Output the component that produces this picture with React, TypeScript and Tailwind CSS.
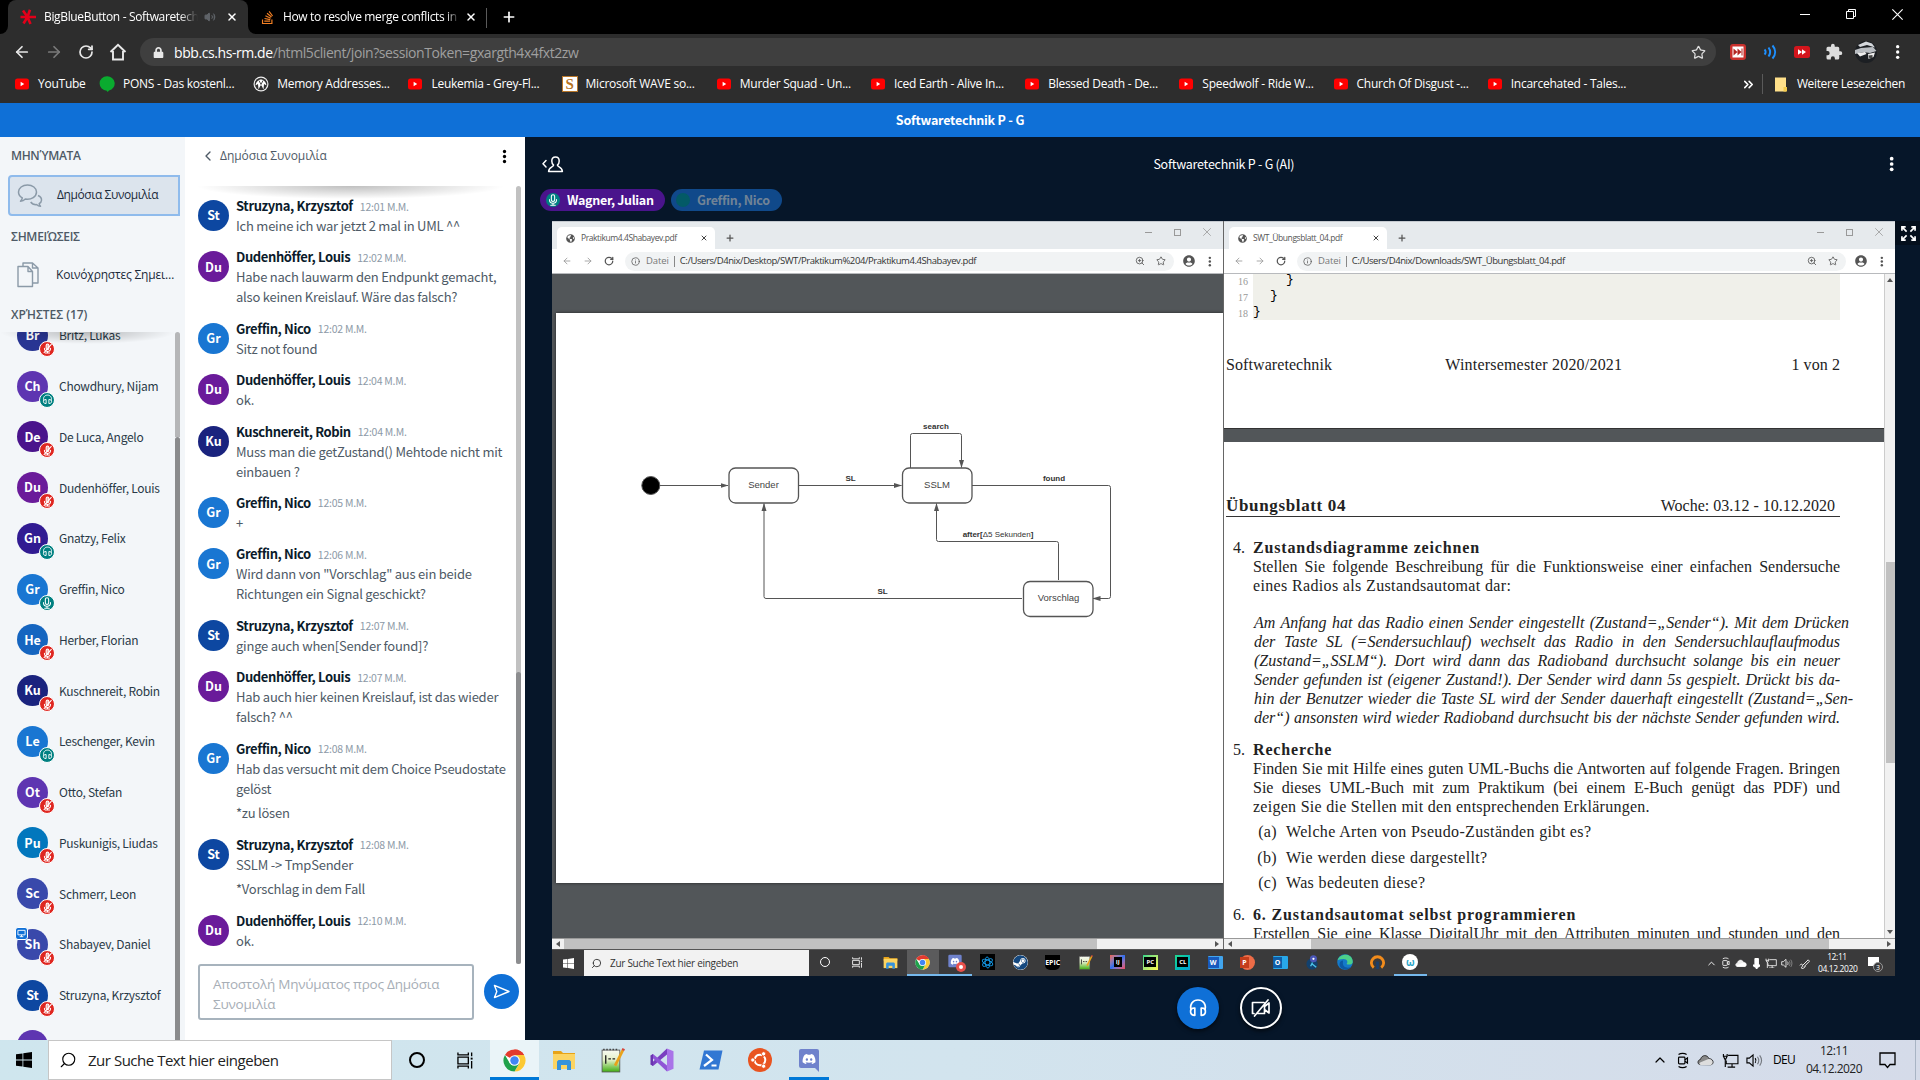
import React from "react";
import {
  ArrowLeft, ArrowRight, RotateCw, Star, X, Plus, Volume2, Search, ZoomIn, Info,
  ChevronLeft, ChevronUp, ChevronsRight,
} from "lucide-react";
import { FaDiscord, FaSteam, FaPuzzlePiece, FaStackOverflow, FaGlobeAmericas, FaUserCircle, FaLock } from "react-icons/fa";

const SEGOE = "font-['Open_Sans','Noto_Sans',sans-serif]";
const SOURCE = "font-['Noto_Sans_CJK_JP','Open_Sans',sans-serif]";
const GREEK = "font-['Open_Sans','Noto_Sans',sans-serif]";
const SERIF = "font-['Liberation_Serif',serif]";

/* ---------- icons ---------- */

function YouTube() {
  return (
    <svg viewBox="0 0 16 16" className="size-4 shrink-0">
      <rect x="1" y="2.5" width="14" height="11" rx="2.5" fill="#f00" />
      <path d="M6.6 5.8v4.4L10.2 8z" fill="#fff" />
    </svg>
  );
}
function Pons() {
  return (
    <svg viewBox="0 0 16 16" className="size-4 shrink-0">
      <path d="M8 .3a7.4 7.2 0 0 1 2 14.2L8.600 16l-.8-1.300A7.300 7.200 0 0 1 8 .3z" fill="#0aab2f" />
    </svg>
  );
}
function Memory() {
  return (
    <svg viewBox="0 0 16 16" className="size-4 shrink-0">
      <circle cx="8" cy="8" r="7.500" fill="#eee" />
      <circle cx="8" cy="8" r="6.300" fill="#333" />
      <path d="M2.500 9.500C3 6 5.500 3.500 8 3.500s5 2.500 5.500 6L11 8l-.5 5.500-2-4h-1l-2 4L5 8z" fill="#fff" />
      <path d="M6 4.500l2 4 2-4" stroke="#222" strokeWidth=".8" fill="none" />
    </svg>
  );
}
function SBadge() {
  return (
    <span className="flex size-4 shrink-0 items-center justify-center border border-[#b9772a] bg-white font-['Liberation_Serif',serif] text-[15px] leading-none font-bold text-[#b8741f]">
      S
    </span>
  );
}
function Asterisk() {
  return (
    <svg viewBox="0 0 16 16" className="size-4 shrink-0" stroke="#e2001a" strokeWidth="2.600" strokeLinecap="butt">
      <path d="M7.500 8L3 1.500M7.500 8L10 .8M7.500 8H.5M7.500 8H16M7.500 8L3.500 14.500M7.500 8l3 7" />
    </svg>
  );
}
function Dots({ className, r = 2 }: { className: string; r?: number }) {
  return (
    <svg viewBox="0 0 6 18" className={className} fill="currentColor">
      <circle cx="3" cy="3" r={r} />
      <circle cx="3" cy="9" r={r} />
      <circle cx="3" cy="15" r={r} />
    </svg>
  );
}
function MicMuted() {
  return (
    <svg viewBox="0 0 16 16" className="size-[11px]" fill="none" stroke="#fff" strokeWidth="1.500" strokeLinecap="round">
      <rect x="6" y="1.500" width="4" height="8" rx="2" fill="#fff" fillOpacity=".6" />
      <path d="M3.500 7.500a4.500 4.500 0 0 0 9 0M8 12v2.500M5 14.500h6M3 14L13.500 2" />
    </svg>
  );
}
function Mic() {
  return (
    <svg viewBox="0 0 16 16" className="size-[12px]" fill="none" stroke="#fff" strokeWidth="1.400" strokeLinecap="round">
      <rect x="5.800" y="1" width="4.400" height="9" rx="2.200" />
      <path d="M3.300 7.500a4.700 4.700 0 0 0 9.400 0M8 12.300v2.500M5 14.900h6" />
    </svg>
  );
}
function Headset({ className }: { className: string }) {
  return (
    <svg viewBox="0 0 20 20" className={className} fill="none" stroke="#fff" strokeWidth="1.700" strokeLinejoin="round" strokeLinecap="round">
      <path d="M3 11.500C1.500 6 5 2 10 2s8.500 4 7 9.500" />
      <path d="M6.800 10C3.500 9.800 2.300 12 2.600 14c.3 2.200 1.600 3.300 4.200 3.300zM13.200 10c3.300-.2 4.500 2 4.200 4-.3 2.200-1.600 3.300-4.200 3.300z" />
    </svg>
  );
}
function Bubbles() {
  return (
    <svg viewBox="0 0 26 26" className="size-[26px] shrink-0" fill="none" stroke="#8b9aa8" strokeWidth="1.500" strokeLinejoin="round">
      <path d="M10.500 2C5.500 2 1.500 5 1.500 9c0 2.600 1.500 4.600 3.800 5.900-.2 1.500-.9 2.400-1.800 3.300 2 0 3.700-.9 4.800-2.100 6.300.9 11.200-2.600 11.200-7.100 0-4-4-7-9-7z" />
      <path d="M21 12.500c2.300 1 3.700 2.500 3.500 4.700-.1 1.500-1 2.700-2.300 3.500.1 1.200.6 1.900 1.300 2.600-1.500 0-2.900-.7-3.700-1.700-2.700.2-5-.9-6.100-2.600" />
    </svg>
  );
}
function Pages() {
  return (
    <svg viewBox="0 0 22 26" className="h-[26px] w-[22px] shrink-0" fill="none" stroke="#8b9aa8" strokeWidth="1.400" strokeLinejoin="round">
      <path d="M1 4.500h10l4.500 5v15H1zM11 4.500v5h4.500" />
      <path d="M6 4.500V1h9.500l5.500 5v15h-5M15.500 1v5H21" />
    </svg>
  );
}
function Chrome({ className }: { className: string }) {
  return (
    <svg viewBox="0 0 24 24" className={className}>
      <circle cx="12" cy="12" r="11.500" fill="#fff" />
      <path d="M12 12L2.040 6.250A11.500 11.500 0 0 1 21.960 6.250z" fill="#e33b2e" />
      <path d="M12 .5A11.500 11.500 0 0 1 21.960 6.250H12z" fill="#e33b2e" />
      <path d="M12 6.250h9.960A11.500 11.500 0 0 1 12 23.500l5-8.500z" fill="#fcc934" />
      <path d="M2.040 6.250A11.500 11.500 0 0 0 12 23.500l5-8.700-9.900.1z" fill="#1fa14a" />
      <circle cx="12" cy="12" r="5.600" fill="#fff" />
      <circle cx="12" cy="12" r="4.400" fill="#4285f4" />
    </svg>
  );
}
function Explorer({ className }: { className: string }) {
  return (
    <svg viewBox="0 0 24 24" className={className}>
      <path d="M1 3h8l2 2h12v4H1z" fill="#e8a317" />
      <path d="M1 6h22v15H1z" fill="#fcd462" />
      <path d="M5 22v-8.500l1.500-1.500h11l1.500 1.500V22h-4v-5H9v5z" fill="#3693dc" />
    </svg>
  );
}
function Notepad({ className }: { className: string }) {
  return (
    <svg viewBox="0 0 24 24" className={className}>
      <defs>
        <linearGradient id="npp" x1="0" y1="0" x2="0" y2="1">
          <stop offset="0" stopColor="#f7f9f2" />
          <stop offset=".45" stopColor="#e4f0c8" />
          <stop offset="1" stopColor="#3fae12" />
        </linearGradient>
      </defs>
      <rect x="2" y="2" width="17" height="21" fill="url(#npp)" stroke="#555" strokeWidth=".8" />
      <path d="M3 1.500h15" stroke="#444" strokeWidth="1.500" strokeDasharray="1.500 1.500" />
      <path d="M5.500 7v8M8 10.500h2.500M12 10.500h2.500" stroke="#222" strokeWidth="1.300" />
      <path d="M22 2l-7.500 15" stroke="#e9a21b" strokeWidth="2.600" />
      <path d="M22.800.6l-.8 1.800" stroke="#d6453a" strokeWidth="2.600" />
    </svg>
  );
}
function VisualStudio() {
  return (
    <svg viewBox="0 0 24 24" className="size-6">
      <path d="M17 .5l6.500 2.800v17.400L17 23.500z" fill="#a974e8" />
      <path d="M17 .5L.5 16l2.500 2 14-11.500z" fill="#7a3fc0" />
      <path d="M17 23.500L.5 8 3 6l14 11.500z" fill="#8f55d6" />
      <path d="M.5 7.500L3 6v12L.5 16.500z" fill="#6a35b0" />
    </svg>
  );
}
function PowerShell() {
  return (
    <svg viewBox="0 0 24 24" className="size-6">
      <path d="M5 2.500h18.500L19.500 21.500H.5z" fill="#3277d3" />
      <path d="M7 6.500l6 5.500-8 6M12.500 17.500h5" stroke="#fff" strokeWidth="2.200" fill="none" />
    </svg>
  );
}
function Ubuntu() {
  return (
    <svg viewBox="0 0 24 24" className="size-6">
      <circle cx="12" cy="12" r="12" fill="#e95420" />
      <circle cx="12" cy="12" r="5.300" fill="none" stroke="#fff" strokeWidth="2" strokeDasharray="9.600 1.500" strokeDashoffset="4.800" />
      <g fill="#fff" stroke="#e95420" strokeWidth=".8">
        <circle cx="4.800" cy="12" r="2.100" />
        <circle cx="15.600" cy="5.800" r="2.100" />
        <circle cx="15.600" cy="18.200" r="2.100" />
      </g>
    </svg>
  );
}
function Discord({ className }: { className: string }) {
  return (
    <svg viewBox="0 0 24 24" className={className}>
      <path d="M4 1h16a2 2 0 0 1 2 2v21l-4-4H4a2 2 0 0 1-2-2V3a2 2 0 0 1 2-2z" fill="#6f82cc" />
      <g transform="translate(5 4) scale(.022)"><FaDiscord size={640} color="#fff" /></g>
    </svg>
  );
}
function Windows({ className }: { className: string }) {
  return (
    <svg viewBox="0 0 16 16" className={className} fill="currentColor">
      <path d="M0 2.300L6.500 1.400V7.600H0zM7.300 1.300L16 0v7.600H7.300zM0 8.400h6.500v6.200L0 13.700zM7.300 8.400H16V16l-8.700-1.300z" />
    </svg>
  );
}
function TaskView({ className }: { className: string }) {
  return (
    <svg viewBox="0 0 18 18" className={className} fill="none" stroke="currentColor" strokeWidth="1.400">
      <path d="M1 .5v2.500h11V.5M1 5.500h11v7H1zM1 17.500V15h11v2.500M15.500.5v4M15.500 9.500v8" />
      <rect x="14.500" y="6" width="2" height="2" fill="currentColor" stroke="none" />
    </svg>
  );
}
function MeetNow({ className }: { className: string }) {
  return (
    <svg viewBox="0 0 16 20" className={className} fill="none" stroke="currentColor" strokeWidth="1.400">
      <rect x="3" y="6" width="7.500" height="8" rx="1" />
      <path d="M10.500 9l3-2v6l-3-2M3 3c2.500-1.800 7-1.800 9.500 0M3 17c2.500 1.800 7 1.800 9.500 0" />
    </svg>
  );
}
function Cloud({ className, top, bottom }: { className: string; top: string; bottom: string }) {
  return (
    <svg viewBox="0 0 20 14" className={className} stroke="currentColor" strokeWidth=".8">
      <path d="M3.500 12.500C0 12 .5 7 4 6.500 5.500.5 12.500.500 14 5.500c5-.5 7 6 2.500 7.200z" fill={top} />
      <path d="M4.500 13C2 12.500 2.500 10.500 5 9.500L13.500 6c5-.5 6.500 5.500 3 7z" fill={bottom} stroke="none" />
    </svg>
  );
}
function Monitor({ className }: { className: string }) {
  return (
    <svg viewBox="0 0 18 16" className={className} fill="none" stroke="currentColor" strokeWidth="1.200">
      <path d="M6.500 2.500H17v9H4.500V8M10.700 11.500V15M6 15h8" />
      <path d="M1.500 1v2.500h4V1M1.500 3.500L3 6.500h1L5.500 3.500M3.500 6.500V15" />
    </svg>
  );
}
function Speaker({ className }: { className: string }) {
  return (
    <svg viewBox="0 0 18 16" className={className} fill="none" stroke="currentColor" strokeWidth="1.200">
      <path d="M1 5.500h2.500L7.500 2v12L3.500 10.500H1z" />
      <path d="M9.800 5.500c1 1.500 1 3.500 0 5" />
      <path d="M12.200 4c1.700 2.400 1.700 5.600 0 8M14.600 2.500c2.400 3.300 2.400 7.700 0 11" opacity=".45" />
    </svg>
  );
}
function Restore() {
  return (
    <svg viewBox="0 0 10 10" className="size-[10px]" fill="none" stroke="#fff">
      <path d="M.5 2.500h7v7h-7zM2.500 2.500v-2h7v7h-2" />
    </svg>
  );
}
function CrossThin({ className }: { className: string }) {
  return (
    <svg viewBox="0 0 10 10" className={className} stroke="currentColor" fill="none">
      <path d="M.3.3l9.400 9.400M9.700.3L.3 9.700" />
    </svg>
  );
}
function VideoOff() {
  return (
    <svg viewBox="0 0 22 20" className="h-5 w-[22px]" fill="none" stroke="#fff" strokeWidth="1.700" strokeLinejoin="round" strokeLinecap="round">
      <path d="M14 4.500H2.500v11H4M8 15.500h6.500V6M14.500 8.500L19 5v10l-4.500-3.500M4.500 18L18 2" />
    </svg>
  );
}
function UserToggle() {
  return (
    <svg viewBox="0 0 22 17" className="h-[17px] w-[22px]" fill="none" stroke="#fff" strokeWidth="1.500" strokeLinecap="round" strokeLinejoin="round">
      <path d="M4 4.500L1 7.800 4 11" />
      <path d="M13.500 1c-2.300 0-3.700 1.600-3.700 4 0 1.700.7 3.300 1.800 4.100 0 2.300-4.600 1.400-5 6.400h13.800c-.4-5-5-4.100-5-6.400 1.100-.8 1.800-2.400 1.800-4.100 0-2.400-1.400-4-3.700-4z" />
    </svg>
  );
}

/* ---------- outer browser ---------- */

const bookmarks: { t: string; i: React.ReactNode }[] = [
  { t: "YouTube", i: <YouTube /> },
  { t: "PONS - Das kostenl...", i: <Pons /> },
  { t: "Memory Addresses...", i: <Memory /> },
  { t: "Leukemia - Grey-Fl...", i: <YouTube /> },
  { t: "Microsoft WAVE so...", i: <SBadge /> },
  { t: "Murder Squad - Un...", i: <YouTube /> },
  { t: "Iced Earth - Alive In...", i: <YouTube /> },
  { t: "Blessed Death - De...", i: <YouTube /> },
  { t: "Speedwolf - Ride W...", i: <YouTube /> },
  { t: "Church Of Disgust -...", i: <YouTube /> },
  { t: "Incarcehated - Tales...", i: <YouTube /> },
];

function BrowserChrome() {
  return (
    <header className={`${SEGOE} h-[103px] w-full bg-[#2d2d2d] text-white`}>
      <div className="flex h-[34px] bg-black">
        <div className="flex h-[34px] w-2 items-end bg-[#2d2d2d]"><div className="h-full w-full rounded-br-lg bg-black" /></div>
        <div className="flex w-[240px] items-center rounded-t-lg bg-[#2d2d2d] pl-3">
          <Asterisk />
          <span className="ml-2 w-[154px] overflow-hidden text-[12px] tracking-[-0.35px] whitespace-nowrap [mask-image:linear-gradient(90deg,#000_88%,transparent)]">BigBlueButton - Softwaretech</span>
          <Volume2 className="ml-[6px] size-3 fill-[#5f6368] text-[#5f6368]" />
          <X className="ml-[10px] size-3" strokeWidth={3} />
        </div>
        <div className="h-[34px] w-2 bg-[#2d2d2d]"><div className="h-full w-full rounded-bl-lg bg-black" /></div>
        <div className="flex w-[230px] items-center pl-1">
          <FaStackOverflow className="size-[15px] text-[#f48024]" />
          <span className="ml-2 w-[177px] overflow-hidden text-[12px] tracking-[-0.35px] whitespace-nowrap [mask-image:linear-gradient(90deg,#000_92%,transparent)]">How to resolve merge conflicts in</span>
          <X className="ml-[5px] size-3" strokeWidth={3} />
        </div>
        <div className="mt-2 h-5 w-px bg-[#5a5a5a]" />
        <Plus className="mt-[9px] ml-[14px] size-4" strokeWidth={2.500} />
        <div className="ml-auto flex h-7 items-center">
          <div className="flex w-[46px] justify-center"><div className="h-px w-[10px] bg-white" /></div>
          <div className="flex w-[46px] justify-center"><Restore /></div>
          <div className="flex w-[46px] justify-center"><CrossThin className="size-[11px]" /></div>
        </div>
      </div>

      <div className="flex h-[36px] items-center">
        <div className="flex w-[140px] items-center pl-[13px] text-[#e8e8e8]">
          <ArrowLeft className="size-[18px]" strokeWidth={2.300} />
          <ArrowRight className="ml-[14px] size-[18px] text-[#7a7a7a]" strokeWidth={2.300} />
          <RotateCw className="ml-[15px] size-[16px]" strokeWidth={2.600} />
          <svg viewBox="0 0 18 18" className="ml-[15px] size-[18px]" fill="none" stroke="currentColor" strokeWidth="1.900">
            <path d="M1.500 9L9 1.800 16.500 9M4 8v8.500h10V8" />
          </svg>
        </div>
        <div className="flex h-7 w-[1576px] items-center rounded-full bg-[#3f3f3f] px-3">
          <FaLock className="ml-px size-[11px] text-[#e8e8e8]" />
          <span className="ml-[10px] text-[14px] tracking-[-0.420px] whitespace-nowrap text-[#9f9f9f]"><span className="text-white">bbb.cs.hs-rm.de</span>/html5client/join?sessionToken=gxargth4x4fxt2zw</span>
          <Star className="mr-[-2px] ml-auto size-[15px] text-[#ddd]" />
        </div>
        <div className="ml-[6px] flex flex-1 items-center">
          <span className="flex w-8 justify-center">
            <svg viewBox="0 0 16 16" className="size-4"><rect width="16" height="16" rx="3" fill="#c9302c" /><rect x="2.500" y="2.500" width="11" height="11" fill="#fff" /><path d="M3.500 4.500L7.500 8l-4 3.500zM7.500 4.500L11.500 8l-4 3.500zM11.500 4.500h1v7h-1z" fill="#b32521" /></svg>
          </span>
          <span className="flex w-8 justify-center">
            <svg viewBox="0 0 16 16" className="size-4" fill="none" stroke="#1e90ff" strokeWidth="2"><path d="M2.500 5.500c1.500 1.500 1.500 3.500 0 5M6.500 3.500c2 2.700 2 6.300 0 9M10.500 1.500c3.500 4 3.500 9 0 13" /></svg>
          </span>
          <span className="flex w-8 justify-center">
            <svg viewBox="0 0 16 16" className="size-4"><rect y="2" width="16" height="12" rx="2.500" fill="#d3151c" /><path d="M4 5.200L8 8l-4 2.800zM8 5.200L12 8l-4 2.800z" fill="#fff" /></svg>
          </span>
          <span className="flex w-8 justify-center">
            <svg viewBox="0 0 24 24" className="size-[18px]" fill="#ddd"><path d="M20.500 11H19V7a2 2 0 0 0-2-2h-4V3.500a2.500 2.500 0 0 0-5 0V5H4a2 2 0 0 0-2 2v3.800h1.500a2.700 2.700 0 0 1 0 5.400H2V20a2 2 0 0 0 2 2h3.800v-1.500a2.700 2.700 0 0 1 5.400 0V22H17a2 2 0 0 0 2-2v-4h1.500a2.500 2.500 0 0 0 0-5z" /></svg>
          </span>
          <span className="flex w-8 justify-center">
            <svg viewBox="0 0 22 22" className="size-[22px]"><circle cx="11" cy="11" r="11" fill="#1c1f23" /><path d="M3 4l8-3.500 6 2 3 4-8-2.500-7 2z" fill="#d5d8dc" /><path d="M0 9l6-2 12-1 3.500 4-6.500 2-7-1-8 2z" fill="#b9bdc2" /><path d="M2 12l8-1 1.500 2-6.500 2.500zM13 13l7-1.500-1.500 4.500-5 2z" fill="#eee" /><path d="M13.500 14.500l4-.5v3l-3 .5z" fill="#444" /></svg>
          </span>
          <span className="flex w-8 justify-center"><Dots className="h-4" r={1.900} /></span>
        </div>
      </div>

      <div className="flex h-[28px] items-center pl-[14px] text-[12px] tracking-[-0.25px]">
        {bookmarks.map((b, i) => (
          <div key={b.t} className={`flex shrink-0 items-center gap-2 whitespace-nowrap ${i === 0 ? "w-[85px]" : "w-[154.200px]"}`}>
            {b.i}
            <span>{b.t}</span>
          </div>
        ))}
        <ChevronsRight className="ml-[100px] size-[15px] shrink-0" strokeWidth={2.500} />
        <div className="ml-[6px] h-5 w-px bg-[#5a5a5a]" />
        <svg viewBox="0 0 12 15" className="ml-3 h-[15px] w-3 shrink-0"><path d="M0 .5h11v14H0z" fill="#ffe08a" /><path d="M8.500 10H12v4.500H8.500z" fill="#f5cc4d" /></svg>
        <span className="ml-[10px] tracking-[-0.350px] whitespace-nowrap">Weitere Lesezeichen</span>
      </div>
    </header>
  );
}

/* ---------- user list ---------- */

type Badge = "muted" | "listen" | "mic";
const users: { n: string; c: string; b: Badge; presenter?: boolean }[] = [
  { n: "Britz, Lukas", c: "bg-[#283593]", b: "muted" },
  { n: "Chowdhury, Nijam", c: "bg-[#5e35b1]", b: "listen" },
  { n: "De Luca, Angelo", c: "bg-[#4a148c]", b: "muted" },
  { n: "Dudenhöffer, Louis", c: "bg-[#6a1b9a]", b: "muted" },
  { n: "Gnatzy, Felix", c: "bg-[#311b92]", b: "listen" },
  { n: "Greffin, Nico", c: "bg-[#1976d2]", b: "mic" },
  { n: "Herber, Florian", c: "bg-[#1565c0]", b: "muted" },
  { n: "Kuschnereit, Robin", c: "bg-[#1a237e]", b: "muted" },
  { n: "Leschenger, Kevin", c: "bg-[#1976d2]", b: "listen" },
  { n: "Otto, Stefan", c: "bg-[#5e35b1]", b: "muted" },
  { n: "Puskunigis, Liudas", c: "bg-[#0277bd]", b: "muted" },
  { n: "Schmerr, Leon", c: "bg-[#3949ab]", b: "muted" },
  { n: "Shabayev, Daniel", c: "bg-[#3949ab]", b: "muted", presenter: true },
  { n: "Struzyna, Krzysztof", c: "bg-[#0d47a1]", b: "muted" },
];

function Sidebar() {
  return (
    <aside className="flex w-[185px] shrink-0 flex-col bg-[#f3f6f9]">
      <div className={`${GREEK} mt-[10px] h-[18px] pl-[11px] text-[12px] leading-[18px] font-semibold tracking-[-0.350px] text-[#4e5a66]`}>ΜΗΝΎΜΑΤΑ</div>
      <div className={`${GREEK} mt-[10px] ml-2 flex h-[41px] w-[172px] items-center rounded-l-[4px] border-2 border-[#8fbbec] bg-[#dce4ed] pl-[7px] text-[12px] tracking-[-0.4px] text-[#1b2a3a]`}>
        <Bubbles />
        <span className="mb-[2px] ml-[14px]">Δημόσια Συνομιλία</span>
      </div>
      <div className={`${GREEK} mt-[12px] h-[18px] pl-[11px] text-[12px] leading-[18px] font-semibold tracking-[-0.3px] text-[#4e5a66]`}>ΣΗΜΕΙΏΣΕΙΣ</div>
      <div className={`${GREEK} mt-[8px] ml-2 flex h-[41px] w-[172px] items-center pl-[9px] text-[12px] tracking-[-0.2px] text-[#1b2a3a]`}>
        <Pages />
        <span className="ml-[17px] whitespace-nowrap">Κοινόχρηστες Σημει…</span>
      </div>
      <div className={`${GREEK} mt-[11px] h-[18px] pl-[11px] text-[12px] leading-[18px] font-semibold tracking-[-0.050px] text-[#4e5a66]`}>ΧΡΉΣΤΕΣ (17)</div>
      <div className="mt-[8px] flex min-h-0 flex-1">
        <div className="relative w-[175px] overflow-hidden">
          <div className="absolute inset-x-0 top-0 z-10 h-3 bg-[radial-gradient(farthest-side_at_50%_0,rgba(0,0,0,0.25),transparent)]" />
          <ul className="-mt-[22px]">
            {users.map((u) => (
              <li key={u.n} className={`${SOURCE} flex h-[50.750px] items-center pl-[17px]`}>
                <div className={`relative flex size-[31px] shrink-0 items-center justify-center rounded-full text-[12.500px] leading-none font-bold text-white ${u.c}`}>
                  {u.n.slice(0, 2)}
                  <span className={`absolute -right-[7px] -bottom-[6px] flex size-[16px] items-center justify-center rounded-full border border-white ${u.b === "muted" ? "bg-[#df2721]" : "bg-[#008081]"}`}>
                    {u.b === "muted" ? <MicMuted /> : u.b === "mic" ? <Mic /> : <Headset className="size-[11px]" />}
                  </span>
                  {u.presenter && (
                    <span className="absolute -top-[2px] -left-[2px] flex size-[13px] items-center justify-center rounded-[3px] border border-white bg-[#0f70d7]">
                      <svg viewBox="0 0 10 10" className="size-[9px]" fill="none" stroke="#fff"><path d="M1 1.500h8v5H1zM5 6.500v2M3 8.500h4" /></svg>
                    </span>
                  )}
                </div>
                <span className="ml-[11px] text-[12px] leading-[18px] tracking-[-0.270px] whitespace-nowrap text-[#2a3a48]">{u.n}</span>
              </li>
            ))}
            <li className="flex h-[50.750px] items-center pl-[17px]"><div className="size-[31px] rounded-full bg-[#5e35b1]" /></li>
          </ul>
        </div>
        <div className="flex w-[5px] flex-col">
          <div className="h-[105px] rounded-t bg-[#b5b6b8]" />
          <div className="flex-1 rounded-t bg-[#8a8b8d]" />
        </div>
      </div>
    </aside>
  );
}

/* ---------- chat ---------- */

const K = { St: "bg-[#0d47a1]", Du: "bg-[#6a1b9a]", Gr: "bg-[#1976d2]", Ku: "bg-[#1a237e]" };
const messages: { n: string; t: string; p: string[][] }[] = [
  { n: "Struzyna, Krzysztof", t: "12:01", p: [["Ich meine ich war jetzt 2 mal in UML ^^"]] },
  { n: "Dudenhöffer, Louis", t: "12:02", p: [["Habe nach lauwarm den Endpunkt gemacht,", "also keinen Kreislauf. Wäre das falsch?"]] },
  { n: "Greffin, Nico", t: "12:02", p: [["Sitz not found"]] },
  { n: "Dudenhöffer, Louis", t: "12:04", p: [["ok."]] },
  { n: "Kuschnereit, Robin", t: "12:04", p: [["Muss man die getZustand() Mehtode nicht mit", "einbauen ?"]] },
  { n: "Greffin, Nico", t: "12:05", p: [["+"]] },
  { n: "Greffin, Nico", t: "12:06", p: [['Wird dann von "Vorschlag" aus ein beide', "Richtungen ein Signal geschickt?"]] },
  { n: "Struzyna, Krzysztof", t: "12:07", p: [["ginge auch when[Sender found]?"]] },
  { n: "Dudenhöffer, Louis", t: "12:07", p: [["Hab auch hier keinen Kreislauf, ist das wieder", "falsch? ^^"]] },
  { n: "Greffin, Nico", t: "12:08", p: [["Hab das versucht mit dem Choice Pseudostate", "gelöst"], ["*zu lösen"]] },
  { n: "Struzyna, Krzysztof", t: "12:08", p: [["SSLM -> TmpSender"], ["*Vorschlag in dem Fall"]] },
  { n: "Dudenhöffer, Louis", t: "12:10", p: [["ok."]] },
];

function Chat() {
  return (
    <section className="flex w-[340px] shrink-0 flex-col bg-white">
      <div className={`${GREEK} flex h-[49px] items-center pr-[18px] pb-[11px] pl-[15px] text-[12px] font-medium tracking-[-0.070px] text-[#4e5a66]`}>
        <ChevronLeft className="size-4" strokeWidth={2} />
        <span className="ml-1">Δημόσια Συνομιλία</span>
        <Dots className="ml-auto h-[15px] text-black" />
      </div>
      <div className="flex h-[778px]">
        <div className="relative w-[331px] overflow-hidden">
          <div className="absolute inset-x-3 top-0 h-[13px] bg-[radial-gradient(farthest-side_at_50%_0,rgba(0,0,0,0.25),transparent)]" />
          <div className={`${SOURCE} flex flex-col gap-[11.400px] pt-[10px] pl-[13px]`}>
            {messages.map((m, i) => (
              <article key={i} className="flex">
                <div className={`mt-[4px] flex size-[31px] shrink-0 items-center justify-center rounded-full text-[12.500px] leading-none font-bold text-white ${K[m.n.slice(0, 2) as keyof typeof K]}`}>
                  {m.n.slice(0, 2)}
                </div>
                <div className="ml-[7px]">
                  <div className="flex h-5 items-center gap-[7px] leading-5 whitespace-nowrap">
                    <span className="text-[13px] font-bold tracking-[-0.380px] text-[#0b1b2b]">{m.n}</span>
                    <span className="mt-px text-[10.500px] tracking-[-0.250px] text-[#8d9aa7]">{m.t} M.M.</span>
                  </div>
                  <div className="flex flex-col gap-[4.700px]">
                    {m.p.map((lines, j) => (
                      <div key={j}>
                        {lines.map((l) => (
                          <div key={l} className="h-5 text-[13px] leading-5 tracking-[-0.230px] whitespace-nowrap text-[#4e5a66]">{l}</div>
                        ))}
                      </div>
                    ))}
                  </div>
                </div>
              </article>
            ))}
          </div>
        </div>
        <div className="flex w-[5px] flex-col rounded bg-[#c1c1c1]">
          <div className="h-[486px]" />
          <div className="flex-1 rounded bg-[#8c8d8f]" />
        </div>
      </div>
      <div className="flex">
        <div className={`${GREEK} ml-[13px] h-[56px] w-[276px] rounded-[3px] border-2 border-[#a7b3bd] px-[13px] pt-[8px] text-[13.500px] leading-5 tracking-[-0.220px] text-[#a7aeb6]`}>
          <div className="whitespace-nowrap">Αποστολή Μηνύματος προς Δημόσια</div>
          <div>Συνομιλία</div>
        </div>
        <div className="mt-[10px] ml-[10px] flex size-[35px] items-center justify-center rounded-full bg-[#0f70d7]">
          <svg viewBox="0 0 18 16" className="h-[15px] w-[17px]" fill="none" stroke="#fff" strokeWidth="1.500" strokeLinejoin="round"><path d="M1.500 1.500L17 8 1.500 14.500 4 8z" /></svg>
        </div>
      </div>
    </section>
  );
}

/* ---------- shared screen ---------- */

function InnerBrowser({ tab, url }: { tab: string; url: string }) {
  return (
    <div className={`${SEGOE} h-[53px] shrink-0 border-b border-[#b8babd] bg-white`}>
      <div className="flex h-7 items-end border-t border-[#c4c9cf] bg-[#e6eaed] pl-[5px]">
        <div className="flex h-[22px] w-[158px] items-center rounded-t-[5px] bg-white pl-[9px]">
          <FaGlobeAmericas className="size-[9px] text-[#555]" />
          <span className="ml-[6px] text-[8.500px] tracking-[-0.42px] text-[#555]">{tab}</span>
          <X className="mr-[7px] ml-auto size-2" strokeWidth={3} color="#444" />
        </div>
        <Plus className="mb-[6px] ml-[10px] size-[10px]" strokeWidth={3} color="#555" />
        <div className="mb-[13px] ml-auto flex items-center gap-[22px] pr-[12px] text-[#999]">
          <div className="h-px w-[7px] bg-[#999]" />
          <div className="size-[7px] border border-[#999]" />
          <CrossThin className="size-2" />
        </div>
      </div>
      <div className="flex h-6 items-center pl-[10px] text-[#555]">
        <ArrowLeft className="size-[10px] text-[#999]" />
        <ArrowRight className="ml-[11px] size-[10px] text-[#999]" />
        <RotateCw className="ml-[11px] size-[10px]" strokeWidth={3} />
        <div className="ml-[11px] flex h-[19px] w-[549px] items-center rounded-full bg-[#f1f3f4] px-[6px]">
          <Info className="size-[9px]" />
          <span className="ml-[6px] text-[9.500px] tracking-[-0.100px] text-[#777]">Datei</span>
          <div className="mx-[5px] h-[11px] w-px bg-[#888]" />
          <span className="text-[9.500px] tracking-[-0.420px] whitespace-nowrap text-[#333]">{url}</span>
          <ZoomIn className="ml-auto size-[10px]" />
          <Star className="mr-[2px] ml-[11px] size-[10px]" />
        </div>
        <FaUserCircle className="ml-[9px] size-[12px]" />
        <Dots className="ml-[13px] h-[11px]" r={2} />
      </div>
    </div>
  );
}

function StateDiagram() {
  return (
    <svg viewBox="556 313 667 569" className="h-[569px] w-[667px]" fill="none" stroke="#555" strokeWidth="1">
      <defs>
        <marker id="arrow" viewBox="0 0 8 6" refX="7.500" refY="3" markerWidth="8" markerHeight="6" orient="auto" markerUnits="userSpaceOnUse">
          <path d="M0 .5L8 3 0 5.500z" fill="#555" stroke="none" />
        </marker>
      </defs>
      <circle cx="650.800" cy="485.500" r="9" fill="#000" stroke="#555" />
      <g markerEnd="url(#arrow)">
        <path d="M660 485.500H728" />
        <path d="M798 485.500H901.500" />
        <path d="M910.500 468V435.500q0-2 2-2h47q2 0 2 2V467.500" />
        <path d="M970 485.500H1108.500q2 0 2 2V596.500q0 2-2 2H1093" />
        <path d="M1058.500 580V543.500q0-2-2-2H938.500q-2 0-2-2V503.500" />
        <path d="M1022 598.500H766q-2 0-2-2V503.500" />
      </g>
      <g fill="#fff" strokeWidth="1.300">
        <rect x="729" y="468" width="69.500" height="35" rx="6.500" />
        <rect x="902.500" y="468" width="69.500" height="35" rx="6.500" />
        <rect x="1023.500" y="581.500" width="69.500" height="35" rx="6.500" />
      </g>
      <g fill="#444" stroke="none" textAnchor="middle" className="font-['Liberation_Sans',sans-serif] text-[9.500px]">
        <text x="763.500" y="487.500">Sender</text>
        <text x="937" y="487.500">SSLM</text>
        <text x="1058.500" y="600.500">Vorschlag</text>
      </g>
      <g fill="#333" stroke="none" textAnchor="middle" className="font-['Liberation_Sans',sans-serif] text-[8px] font-bold">
        <text x="936" y="429">search</text>
        <text x="850.500" y="481">SL</text>
        <text x="1054" y="481">found</text>
        <text x="882.500" y="594">SL</text>
        <text x="998" y="537">after[<tspan fontWeight="normal">Δ5 Sekunden</tspan>]</text>
      </g>
    </svg>
  );
}

function J({ children, className = "" }: { children: React.ReactNode; className?: string }) {
  return <div className={`h-[19px] text-justify leading-[19px] whitespace-nowrap [text-align-last:justify] ${className}`}>{children}</div>;
}

function Exercise({ n, title, children }: { n: string; title: string; children: React.ReactNode }) {
  return (
    <div className="flex">
      <div className="w-[29px] shrink-0 pr-[8px] text-right leading-[19px]">{n}</div>
      <div className="w-[587px]">
        <div className="h-[19px] leading-[19px] font-bold tracking-[0.850px]">{title}</div>
        {children}
      </div>
    </div>
  );
}

function Arrow({ d }: { d: string }) {
  return <svg viewBox="0 0 6 6" className="size-[6px] shrink-0" fill="#555"><path d={d} /></svg>;
}
const LEFT = "M5 0v6L1 3z";
const RIGHT = "M1 0v6l4-3z";

function HScroll({ before, thumb }: { before: string; thumb: string }) {
  return (
    <div className="flex h-[11px] shrink-0 items-center border-t border-[#999] bg-[#f1f1f1] px-[3px]">
      <div className={`flex ${before}`}><Arrow d={LEFT} /></div>
      <div className={`h-full bg-[#c1c1c1] ${thumb}`} />
      <div className="ml-auto"><Arrow d={RIGHT} /></div>
    </div>
  );
}

function ExerciseSheet() {
  return (
    <div className={`${SERIF} flex h-[665px] min-h-0 text-[16px] text-[#222]`}>
      <div className="h-full w-[660px] overflow-hidden bg-white">
        <div className="ml-[4px] flex h-[46px] pl-[4px] text-[10px]">
          <div className="w-[21px] pr-[5px] text-right leading-4 text-[#999]">
            <div>16</div><div>17</div><div>18</div>
          </div>
          <div className="w-[587px] bg-[#f0f0ea] font-['Liberation_Mono',monospace] text-[13px] leading-4 text-black">
            <div className="-mt-[2px] pl-[33px]">{"}"}</div><div className="pl-[17px]">{"}"}</div><div>{"}"}</div>
          </div>
        </div>
        <div className="mt-[35px] flex w-[616px] justify-between pl-[2px] leading-5 tracking-[0.080px]">
          <span>Softwaretechnik</span><span className="mr-[56px] tracking-[0.200px]">Wintersemester 2020/2021</span><span>1 von 2</span>
        </div>
        <div className="mt-[53px] h-[14px] border-t border-[#333] bg-[#525659]" />
        <div className="mt-[53px] ml-[2px] flex h-[22px] w-[614px] justify-between border-b border-[#333] pr-[5px] leading-[21px]">
          <span className="text-[17px] font-bold tracking-[0.650px]">Übungsblatt 04</span>
          <span className="tracking-[0.020px]">Woche: 03.12 - 10.12.2020</span>
        </div>
        <div className="mt-[20.500px]">
          <Exercise n="4." title="Zustandsdiagramme zeichnen">
            <J>Stellen Sie folgende Beschreibung für die Funktionsweise einer einfachen Sendersuche</J>
            <div className="h-[19px] leading-[19px] tracking-[0.350px]">eines Radios als Zustandsautomat dar:</div>
            <div className="mt-[18.500px] pl-px italic">
              <J className="w-[595px]">Am Anfang hat das Radio einen Sender eingestellt (Zustand=„Sender“). Mit dem Drücken</J>
              <J>der Taste SL (=Sendersuchlauf) wechselt das Radio in den Sendersuchlauflaufmodus</J>
              <J>(Zustand=„SSLM“). Dort wird dann das Radioband durchsucht solange bis ein neuer</J>
              <J>Sender gefunden ist (eigener Zustand!). Der Sender wird dann 5s gespielt. Drückt bis da-</J>
              <J className="w-[599px]">hin der Benutzer wieder die Taste SL wird der Sender dauerhaft eingestellt (Zustand=„Sen-</J>
              <J>der“) ansonsten wird wieder Radioband durchsucht bis der nächste Sender gefunden wird.</J>
            </div>
          </Exercise>
          <div className="mt-[12.500px]">
            <Exercise n="5." title="Recherche">
              <J>Finden Sie mit Hilfe eines guten UML-Buchs die Antworten auf folgende Fragen. Bringen</J>
              <J>Sie dieses UML-Buch mit zum Praktikum (bei einem E-Buch genügt das PDF) und</J>
              <div className="h-[19px] leading-[19px] tracking-[0.270px]">zeigen Sie die Stellen mit den entsprechenden Erklärungen.</div>
              <div className="mt-[6.500px] flex h-[70px] flex-col justify-between tracking-[0.350px]">
                {[["(a)", "Welche Arten von Pseudo-Zuständen gibt es?"], ["(b)", "Wie werden diese dargestellt?"], ["(c)", "Was bedeuten diese?"]].map(([a, b]) => (
                  <div key={a} className="flex h-[19px] leading-[19px]"><span className="w-6 text-right">{a}</span><span className="ml-[9px]">{b}</span></div>
                ))}
              </div>
            </Exercise>
          </div>
          <div className="mt-[12.500px]">
            <Exercise n="6." title="6. Zustandsautomat selbst programmieren">
              <J>Erstellen Sie eine Klasse DigitalUhr mit den Attributen minuten und stunden und den</J>
            </Exercise>
          </div>
        </div>
      </div>
      <div className="flex w-[11px] flex-col items-center border-l border-[#ccc] bg-[#f1f1f1] py-[3px]">
        <Arrow d="M0 5h6L3 1z" />
        <div className="mt-[279px] h-[201px] w-[9px] bg-[#c1c1c1]" />
        <div className="mt-auto"><Arrow d="M0 1h6L3 5z" /></div>
      </div>
    </div>
  );
}

function Tile({ children, className }: { children: React.ReactNode; className: string }) {
  return <span className={`flex w-[15px] items-center justify-center text-[7px] leading-none font-bold text-white ${className}`}>{children}</span>;
}

function RemoteTaskbar() {
  const icons: React.ReactNode[] = [
    <span className="size-[10px] rounded-full border-[1.500px] border-white" />,
    <TaskView className="size-[11px]" />,
    <Explorer className="size-[15px]" />,
    <Chrome className="size-[15px]" />,
    <span className="relative"><Discord className="size-[16px]" /><span className="absolute -right-[3px] -bottom-[2px] flex size-[10px] items-center justify-center rounded-full bg-[#e8504c]"><span className="size-[4px] rounded-full bg-white" /></span></span>,
    <Tile className="h-[16px] bg-black"><svg viewBox="0 0 14 14" className="size-[13px]" fill="none" stroke="#149bea"><ellipse cx="7" cy="7" rx="6" ry="2.500" transform="rotate(25 7 7)" /><ellipse cx="7" cy="7" rx="6" ry="2.500" transform="rotate(85 7 7)" /><ellipse cx="7" cy="7" rx="6" ry="2.500" transform="rotate(145 7 7)" /></svg></Tile>,
    <FaSteam className="size-[15px] rounded-full bg-white text-[#14487f]" />,
    <Tile className="h-[15px] w-[14px] rounded-b-[5px] bg-black text-[5px]">EPIC</Tile>,
    <Notepad className="size-[15px]" />,
    <Tile className="h-[14px] bg-linear-to-br from-[#f0604c] via-[#2a6ff0] to-[#f0405c]"><span className="bg-black p-[2px] text-[6px]">IJ</span></Tile>,
    <Tile className="h-[15px] bg-linear-to-br from-[#21d789] to-[#fcf84a]"><span className="bg-black p-[2px] text-[6px]">PC</span></Tile>,
    <Tile className="h-[15px] bg-linear-to-br from-[#21d789] to-[#0a9fd8]"><span className="bg-black p-[2px] text-[6px]">CL</span></Tile>,
    <Tile className="h-[13px] justify-start rounded-[1px] bg-[#41a5ee]"><span className="bg-[#185abd] p-[2px]">W</span></Tile>,
    <Tile className="h-[15px] justify-start rounded-full bg-[#ed6c47]"><span className="bg-[#c43e1c] p-[2px]">P</span></Tile>,
    <Tile className="h-[13px] justify-start rounded-[1px] bg-[#28a8ea]"><span className="bg-[#0f5ea8] p-[2px]">O</span></Tile>,
    <svg viewBox="0 0 16 16" className="size-[15px]"><circle cx="7.500" cy="9.500" r="6" fill="#12416e" /><circle cx="9" cy="4" r="3.800" fill="#4b57b8" /><path d="M7 9l5 4M6 12l2-4" stroke="#4cc3e8" strokeWidth="1.500" /><circle cx="9" cy="4" r="1.200" fill="#fff" /></svg>,
    <svg viewBox="0 0 16 16" className="size-4"><circle cx="8" cy="8" r="7.800" fill="#1479c9" /><path d="M.5 6.500C2 1 8 0 11 1c4 1.500 5 5 4.700 7.500C15 11 11 11 9.500 10c2-2 .5-5-3-5S1 6 .5 6.500z" fill="#4ccf8a" /><path d="M6 8c-1 4 3 7 8 5-3 4-11 3-11.500-2.500C2.500 8 4 6.500 6 6.500z" fill="#0c59a4" /></svg>,
    <svg viewBox="0 0 16 16" className="size-[15px]" fill="none"><path d="M4 13.500A6.500 6.500 0 1 1 12 13.500" stroke="#f28c1c" strokeWidth="3" /><path d="M8 7v8" stroke="#1b3f6d" strokeWidth="3" /></svg>,
    <span className="flex size-4 items-center justify-center rounded-full bg-white text-[10px] leading-none font-bold text-[#2aa5c8]">ω</span>,
  ];
  return (
    <div className={`${SEGOE} flex h-[27px] shrink-0 items-center border-t border-[#555] bg-[#3a3a3b] text-white`}>
      <div className="flex w-[32px] justify-center"><Windows className="size-[11px]" /></div>
      <div className="flex h-full w-[225px] items-center bg-[#f2f2f2] pl-[7px] text-[#333]">
        <Search className="size-[11px] -scale-x-100" />
        <span className="ml-[8px] text-[10px] tracking-[-0.280px] whitespace-nowrap">Zur Suche Text hier eingeben</span>
      </div>
      {icons.map((ic, i) => (
        <div key={i} className={`flex h-full w-[32.500px] items-center justify-center ${i === 3 ? "bg-[#5b5b5c]" : ""} ${i === 3 || i === 4 || i === 18 ? "border-b-2 border-[#76b9ed]" : "border-b-2 border-transparent"}`}>{ic}</div>
      ))}
      <div className="ml-auto flex items-center pr-[12px]">
        <ChevronUp className="size-[11px]" />
        <MeetNow className="ml-[4px] h-[12px]" />
        <Cloud className="ml-[4px] w-[12px]" top="#eee" bottom="#fff" />
        <svg viewBox="0 0 8 12" className="ml-[6px] h-[11px]" fill="#fff"><rect x="1.500" width="5" height="8" rx="1" /><path d="M0 7h8v2L5 11v1H3v-1L0 9z" /></svg>
        <Monitor className="ml-[5px] w-[12px]" />
        <Speaker className="ml-[4px] w-[12px]" />
        <svg viewBox="0 0 12 12" className="ml-[6px] size-[11px]" fill="none" stroke="#fff"><path d="M4 8l6-6 1.500 1.500-6 6M1 8c2-3 4 0 2 2s3 2 4-1" /></svg>
        <div className="ml-[8px] w-[38px] text-center text-[8.500px] leading-[12px] tracking-[-0.400px]"><div>12:11</div><div>04.12.2020</div></div>
        <span className="relative ml-[12px] h-[12px] w-[15px]"><span className="absolute top-0 left-0 h-[9px] w-[11px] bg-white" /><span className="absolute right-0 -bottom-[3px] flex size-[10px] items-center justify-center rounded-full border border-[#999] bg-[#3a3a3b] text-[7px] leading-none">3</span></span>
      </div>
    </div>
  );
}

function SharedScreen() {
  return (
    <div className="ml-[27px] flex h-[755px] w-[1343px] flex-col bg-[#525659]">
      <div className="flex min-h-0 flex-1">
        <div className="flex w-[671px] flex-col">
          <InnerBrowser tab="Praktikum4.4Shabayev.pdf" url="C:/Users/D4nix/Desktop/SWT/Praktikum%204/Praktikum4.4Shabayev.pdf" />
          <div className="mt-[39px] ml-[4px] h-[570px] bg-white shadow-[0_0_3px_#222]"><StateDiagram /></div>
          <div className="flex-1" />
          <HScroll before="w-[9px]" thumb="w-[533px]" />
        </div>
        <div className="flex w-[672px] flex-col border-l border-[#666]">
          <InnerBrowser tab="SWT_Übungsblatt_04.pdf" url="C:/Users/D4nix/Downloads/SWT_Übungsblatt_04.pdf" />
          <ExerciseSheet />
          <HScroll before="w-[84px]" thumb="w-[518px]" />
        </div>
      </div>
      <RemoteTaskbar />
    </div>
  );
}

function Main() {
  return (
    <main className={`${SOURCE} flex flex-1 flex-col bg-[#061629] text-white`}>
      <div className="flex h-[52px] items-center pt-[2px] pr-[26px] pl-[17px]">
        <UserToggle />
        <div className="flex-1 pr-[5px] text-center text-[12.500px] leading-none tracking-[-0.250px]">Softwaretechnik P - G (AI)</div>
        <Dots className="h-[16px]" r={2.100} />
      </div>
      <div className="flex h-[22px] gap-[6px] pl-[15px] text-[12.500px] leading-none font-bold tracking-[-0.300px]">
        <div className="flex h-[22px] w-[125px] items-center rounded-full bg-[#4a148c] pl-[6px]">
          <span className="flex size-[14px] items-center justify-center rounded-full bg-[#008081]"><Mic /></span>
          <span className="ml-[7px] whitespace-nowrap">Wagner, Julian</span>
        </div>
        <div className="flex h-[22px] w-[111px] items-center rounded-full bg-[#10498a] pl-[5px] text-[#708396]">
          <span className="size-[14px] rounded-full bg-[#035a66]" />
          <span className="ml-[7px] whitespace-nowrap">Greffin, Nico</span>
        </div>
      </div>
      <div className="mt-[10px] flex">
        <SharedScreen />
        <div className="flex h-6 w-[25px] items-center justify-center bg-[#040f1c] pl-px">
          <svg viewBox="0 0 16 16" className="size-[15px]" fill="none" stroke="#fff" strokeWidth="1.800"><path d="M1 5V1h4M11 1h4v4M15 11v4h-4M5 15H1v-4M1 1l5 5M15 1l-5 5M15 15l-5-5M1 15l5-5" /></svg>
        </div>
      </div>
      <div className="mt-[11px] flex justify-center gap-[21px] pl-[13px]">
        <div className="flex size-[42px] items-center justify-center rounded-full bg-[#0f70d7] shadow-[0_2px_4px_rgba(0,0,0,0.6)]"><Headset className="size-5" /></div>
        <div className="flex size-[42px] items-center justify-center rounded-full border-[2.500px] border-white shadow-[0_2px_4px_rgba(0,0,0,0.6)]"><VideoOff /></div>
      </div>
    </main>
  );
}

/* ---------- host taskbar ---------- */

function Taskbar() {
  const icons: React.ReactNode[] = [
    <span className="size-4 rounded-full border-[2.500px] border-black" />,
    <TaskView className="size-[17px]" />,
    <Chrome className="size-[23px]" />,
    <Explorer className="size-6" />,
    <Notepad className="size-[25px]" />,
    <VisualStudio />,
    <PowerShell />,
    <Ubuntu />,
    <Discord className="size-6" />,
  ];
  return (
    <footer className={`${SEGOE} flex h-10 items-center bg-linear-to-r from-[#cfe6ee] via-[#d2e4ee] to-[#d5dbe9] text-black`}>
      <div className="flex w-[48px] justify-center"><Windows className="size-4" /></div>
      <div className="flex h-10 w-[344px] items-center border border-[#c6c6c6] bg-white pl-[10px]">
        <Search className="size-[18px] -scale-x-100" strokeWidth={1.500} />
        <span className="ml-[11px] text-[15px] tracking-[-0.480px] whitespace-nowrap text-[#222]">Zur Suche Text hier eingeben</span>
      </div>
      {icons.map((ic, i) => (
        <div key={i} className={`flex h-10 w-[49.100px] flex-col items-center ${i === 2 ? "bg-[#eaf4f8]" : ""}`}>
          <div className="flex h-[37px] items-center pt-[3px]">{ic}</div>
          {i === 2 && <div className="h-[3px] w-full bg-[#0078d7]" />}
          {i === 8 && <div className="h-[3px] w-10 bg-[#0078d7]" />}
        </div>
      ))}
      <div className="ml-auto flex items-center">
        <ChevronUp className="size-4" strokeWidth={1.800} />
        <MeetNow className="ml-[8px] h-[17px]" />
        <Cloud className="ml-[8px] w-[17px]" top="#888" bottom="#ddd" />
        <Monitor className="ml-[8px] h-[15px]" />
        <Speaker className="ml-[7px] h-[15px]" />
        <span className="ml-[10px] text-[12px] tracking-[-0.700px]">DEU</span>
        <div className="ml-[9px] w-[60px] text-center text-[12px] leading-[18px] tracking-[-0.500px] text-[#222]"><div>12:11</div><div>04.12.2020</div></div>
        <svg viewBox="0 0 17 17" className="ml-[15px] size-[17px]" fill="none" stroke="currentColor" strokeWidth="1.300"><path d="M1 1h15v11.500h-5L8.500 15.500 6 12.500H1z" /></svg>
        <div className="mr-[4px] ml-[19px] h-10 w-px bg-[#a8b4c4]" />
      </div>
    </footer>
  );
}

export default function App() {
  return (
    <div className="flex h-[1080px] w-[1920px] flex-col overflow-hidden bg-[#061629]">
      <BrowserChrome />
      <div className={`${SOURCE} flex h-[34px] shrink-0 items-center justify-center bg-[#0f70d7] text-[12.500px] leading-none font-bold tracking-[-0.200px] text-white`}>Softwaretechnik P - G</div>
      <div className="flex h-[903px] shrink-0">
        <Sidebar />
        <Chat />
        <Main />
      </div>
      <Taskbar />
    </div>
  );
}
